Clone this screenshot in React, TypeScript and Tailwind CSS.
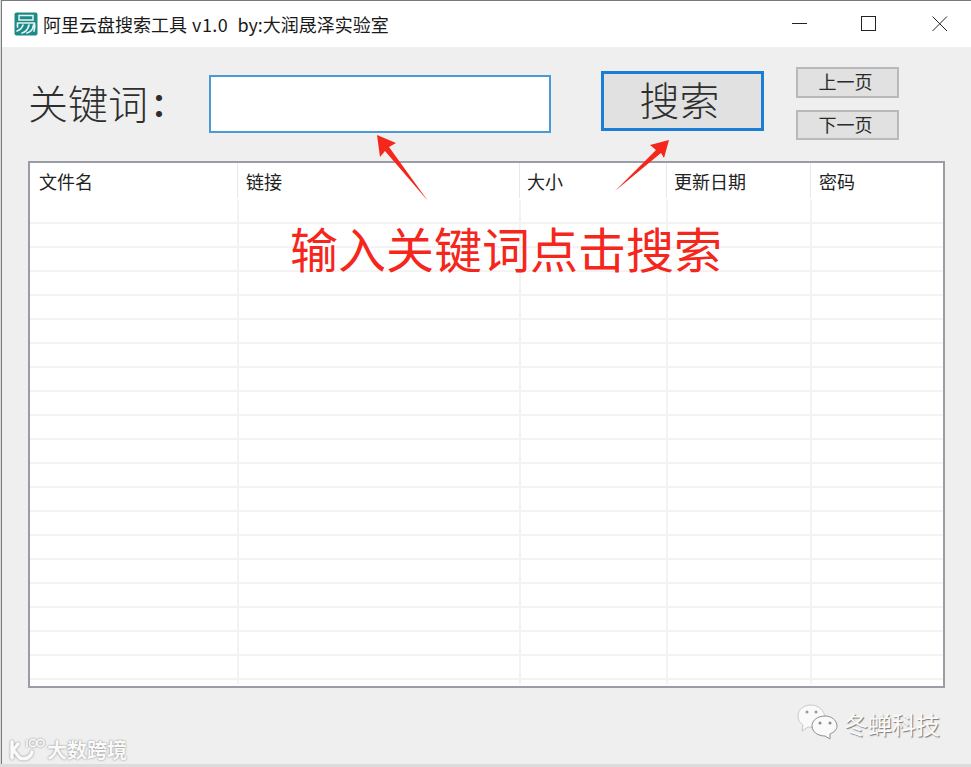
const cjk = "font-['Noto_Sans_CJK_SC','Liberation_Sans',sans-serif]"
const COLUMNS = [
  { name: '文件名', width: 'w-[208px]', pad: 'pl-[9px]' },
  { name: '链接', width: 'w-[282px]', pad: 'pl-[8px]' },
  { name: '大小', width: 'w-[147px]', pad: 'pl-[7px]' },
  { name: '更新日期', width: 'w-[144px]', pad: 'pl-[7px]' },
  { name: '密码', width: 'flex-1', pad: 'pl-[8px]' },
]
const ROWS = Array.from({ length: 20 }, (_, i) => i)

function AppIcon() {
  return (
    <svg width="24" height="24" viewBox="0 0 24 24" className="shrink-0">
      <rect x="0.5" y="0.5" width="23" height="23" rx="2" fill="#1c8b88" />
      <path d="M5 3.500h14v4.500H5z" fill="none" stroke="#e8f4f3" strokeWidth="1.500" />
      <path d="M3.500 11h17M3.500 11v4M3 19c3-1 5-3 6-6M8 21c4-1 6-4 7-8M13 21c4-1 6-4 6.500-8M20.500 11c.5 3 .3 6-.5 8" fill="none" stroke="#e8f4f3" strokeWidth="1.700" strokeLinecap="round" />
    </svg>
  )
}

function WindowControls() {
  return (
    <div className="flex items-center ml-auto">
      <svg width="16" height="16" viewBox="0 0 16 16" className="mr-[53px]">
        <path d="M0 7.500h15" stroke="#222" strokeWidth="1" />
      </svg>
      <svg width="16" height="16" viewBox="0 0 16 16" className="mr-[55px]">
        <rect x="0.500" y="0.500" width="14" height="14" fill="none" stroke="#222" strokeWidth="1" />
      </svg>
      <svg width="16" height="16" viewBox="0 0 16 16" className="mr-[23px]">
        <path d="M0.500 0.500l14.500 14.500M15 0.500L0.500 15" stroke="#222" strokeWidth="1" />
      </svg>
    </div>
  )
}

function Arrows() {
  return (
    <svg width="971" height="767" viewBox="0 0 971 767" className="absolute left-0 top-0 pointer-events-none">
      <polygon points="377,135 396,143 389,147 428,201 385,151 380,157" fill="#f5261c" />
      <polygon points="669,140 650,145 656,150 615,191 661,153 664,158" fill="#f5261c" />
    </svg>
  )
}

function WeChatMark() {
  return (
    <svg width="42" height="36" viewBox="0 0 42 36" className="absolute left-[797px] top-[704px]">
      <path d="M14 1C6 1 1 6 1 12c0 4 2 7 5 9l-1 6 6-4c2 0 4 1 6 0-1-7 6-11 11-10C27 6 21 1 14 1z" fill="#fafafa" stroke="#c9c9c9" />
      <path d="M28 12c-7 0-13 4-13 10s6 10 13 10l5 3v-5c4-2 7-4 7-8 0-6-6-10-12-10z" fill="#fafafa" stroke="#8d8d8d" />
      <circle cx="10" cy="8" r="1.500" fill="#9a9a9a" />
      <circle cx="19" cy="8" r="1.500" fill="#9a9a9a" />
      <circle cx="23" cy="19" r="1.500" fill="#8a8a8a" />
      <circle cx="33" cy="19" r="1.500" fill="#8a8a8a" />
    </svg>
  )
}

function LogoMark() {
  return (
    <svg width="38" height="26" viewBox="0 0 38 26" className="absolute left-[8px] top-[737px] [filter:drop-shadow(0_0_1px_#8a8a8a)]">
      <g fill="none" stroke="#fafafa" strokeWidth="3.500" strokeLinecap="round">
        <path d="M4 5v16M5 13l5-6M6 14l5 6" />
        <path d="M12 21c6 2 11-1 12-6" />
      </g>
      <g fill="none" stroke="#fafafa" strokeWidth="1.600">
        <path d="M19 3v7" />
        <circle cx="25" cy="6" r="3.500" />
        <circle cx="32.500" cy="6" r="3.500" />
      </g>
    </svg>
  )
}

export default function App() {
  return (
    <div className={`relative w-[971px] h-[767px] bg-[#dcdcdc] overflow-hidden ${cjk}`}>
      <div className="ml-px w-[970px] h-[764px] flex flex-col border-l border-t border-[#7a7a7a] bg-[#efefef]">
        {/* title bar */}
        <div className="h-[46px] bg-white flex items-center pl-[12px] shrink-0">
          <AppIcon />
          <span className="ml-[5px] text-[18px] leading-none text-[#1a1a1a] whitespace-nowrap">阿里云盘搜索工具</span>
          <span className="ml-[5px] text-[18px] leading-none text-[#1a1a1a] whitespace-nowrap tracking-[0.5px]">v1.0</span>
          <span className="ml-[9px] text-[18px] leading-none text-[#1a1a1a] whitespace-nowrap">by:大润晟泽实验室</span>
          <WindowControls />
        </div>

        {/* search row */}
        <div className="h-[114px] flex items-start shrink-0">
          <div className="ml-[26px] mt-[30px] w-[181px] text-[40px] leading-[50px] font-light text-[#2e2e2e] whitespace-nowrap flex items-center">
            关键词<span className="ml-[3px] text-[32px] font-bold leading-[50px]">：</span>
          </div>
          <input className="mt-[28px] w-[342px] h-[58px] bg-white border-2 border-[#4a9ad8] outline-none" />
          <button className="ml-[50px] mt-[24px] w-[163px] h-[60px] pr-[6px] pb-[4px] bg-[#e1e1e1] border-[3px] border-[#1a7ed4] text-[40px] leading-none font-light text-[#2e2e2e]">搜索</button>
          <div className="ml-[32px] mt-[20px] w-[103px] flex flex-col gap-[12px]">
            <button className="h-[31px] pr-[4px] pb-[3px] bg-[#e1e1e1] border-2 border-[#b9b9b9] text-[18px] leading-none text-[#2a2a2a]">上一页</button>
            <button className="h-[30px] pr-[4px] pb-[2px] bg-[#e1e1e1] border-2 border-[#b9b9b9] text-[18px] leading-none text-[#2a2a2a]">下一页</button>
          </div>
        </div>

        {/* table */}
        <div className="ml-[26px] w-[917px] h-[527px] bg-white border-2 border-[#9c9ca6] flex flex-col shrink-0">
          <div className="flex h-[37px] pb-[2px] shrink-0">
            {COLUMNS.map((col) => (
              <div key={col.name} className={`${col.width} ${col.pad} h-full flex items-center border-r border-[#e8e8e8] last:border-r-0 text-[18px] leading-none text-[#222]`}>
                {col.name}
              </div>
            ))}
          </div>
          <div className="flex-1 flex flex-col overflow-hidden">
            {ROWS.map((row) => (
              <div key={row} className="flex h-[24px] shrink-0 border-b-2 border-[#f3f3f3]">
                <div className="w-[209px] border-r-2 border-[#f3f3f3]" />
                <div className="w-[282px] border-r-2 border-[#f3f3f3]" />
                <div className="w-[147px] border-r-2 border-[#f3f3f3]" />
                <div className="w-[144px] border-r-2 border-[#f3f3f3]" />
              </div>
            ))}
            <div className="flex h-[4px] shrink-0">
              <div className="w-[209px] border-r-2 border-[#f3f3f3]" />
              <div className="w-[282px] border-r-2 border-[#f3f3f3]" />
              <div className="w-[147px] border-r-2 border-[#f3f3f3]" />
              <div className="w-[144px] border-r-2 border-[#f3f3f3]" />
            </div>
          </div>
        </div>
      </div>

      {/* annotations added on top of the screenshot */}
      <Arrows />
      <div className="absolute left-[290px] top-[214px] text-[48px] leading-[66px] text-[#f5261c] whitespace-nowrap">输入关键词点击搜索</div>

      <WeChatMark />
      <div className="absolute left-[844px] top-[708px] text-[24px] leading-[32px] text-[#fafafa] whitespace-nowrap [text-shadow:1px_1px_1px_#777]">冬蝉科技</div>
      <LogoMark />
      <div className="absolute left-[47px] top-[737px] text-[20px] leading-[26px] font-bold text-[#fafafa] whitespace-nowrap [text-shadow:0_0_2px_#777]">大数跨境</div>
    </div>
  )
}
